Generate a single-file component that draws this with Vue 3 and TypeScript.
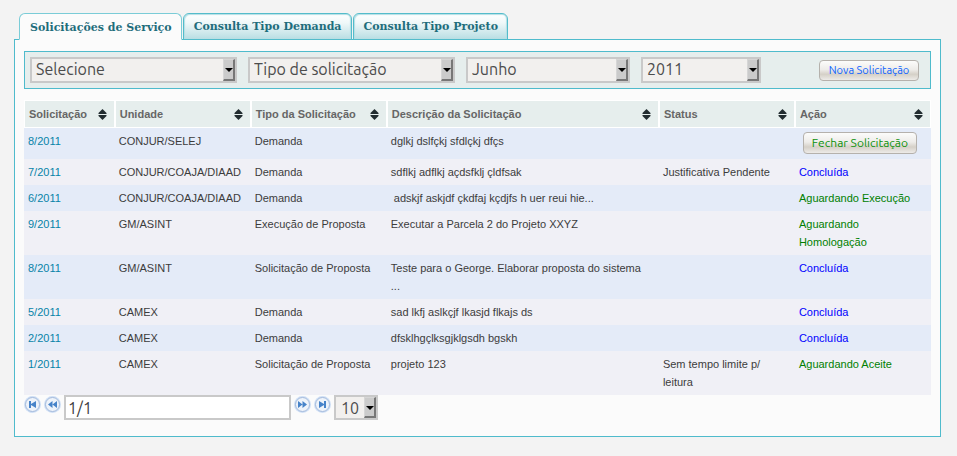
<script setup lang="ts">
import { ref } from 'vue'

interface Row {
  id: string
  unit: string
  type: string
  description: string
  status: string
  action: string
  kind: 'button' | 'done' | 'waiting'
}

const tabs = ['Solicitações de Serviço', 'Consulta Tipo Demanda', 'Consulta Tipo Projeto']
const activeTab = ref(0)

const filters = [
  { id: 'unidade', label: 'Unidade', size: 'large', options: ['Selecione'] },
  { id: 'tipo', label: 'Tipo', size: 'large', options: ['Tipo de solicitação'] },
  { id: 'mes', label: 'Mês', size: 'medium', options: ['Junho'] },
  { id: 'ano', label: 'Ano', size: 'small', options: ['2011'] },
]

const columns = [
  { title: 'Solicitação', cls: 'narrow' },
  { title: 'Unidade', cls: 'regular' },
  { title: 'Tipo da Solicitação', cls: 'regular' },
  { title: 'Descrição da Solicitação', cls: 'wide' },
  { title: 'Status', cls: 'regular' },
  { title: 'Ação', cls: 'regular' },
]

const rows: Row[] = [
  { id: '8/2011', unit: 'CONJUR/SELEJ', type: 'Demanda', description: 'dglkj dslfçkj sfdlçkj dfçs', status: '', action: 'Fechar Solicitação', kind: 'button' },
  { id: '7/2011', unit: 'CONJUR/COAJA/DIAAD', type: 'Demanda', description: 'sdflkj adflkj açdsfklj çldfsak', status: 'Justificativa Pendente', action: 'Concluída', kind: 'done' },
  { id: '6/2011', unit: 'CONJUR/COAJA/DIAAD', type: 'Demanda', description: '\u00a0adskjf askjdf çkdfaj kçdjfs h uer reui hie...', status: '', action: 'Aguardando Execução', kind: 'waiting' },
  { id: '9/2011', unit: 'GM/ASINT', type: 'Execução de Proposta', description: 'Executar a Parcela 2 do Projeto XXYZ', status: '', action: 'Aguardando Homologação', kind: 'waiting' },
  { id: '8/2011', unit: 'GM/ASINT', type: 'Solicitação de Proposta', description: 'Teste para o George. Elaborar proposta do sistema\n...', status: '', action: 'Concluída', kind: 'done' },
  { id: '5/2011', unit: 'CAMEX', type: 'Demanda', description: 'sad lkfj aslkçjf lkasjd flkajs ds', status: '', action: 'Concluída', kind: 'done' },
  { id: '2/2011', unit: 'CAMEX', type: 'Demanda', description: 'dfsklhgçlksgjklgsdh bgskh', status: '', action: 'Concluída', kind: 'done' },
  { id: '1/2011', unit: 'CAMEX', type: 'Solicitação de Proposta', description: 'projeto 123', status: 'Sem tempo limite p/ leitura', action: 'Aguardando Aceite', kind: 'waiting' },
]

const page = ref('1/1')
const back = [
  { label: 'Primeira página', d: 'M5 5h2v3l5-3v7l-5-3v3H5z' },
  { label: 'Página anterior', d: 'M4 8.500 8.500 5v7zM8.500 8.500 13 5v7z' },
]
const forward = [
  { label: 'Próxima página', d: 'M13 8.500 8.500 5v7zM8.500 8.500 4 5v7z' },
  { label: 'Última página', d: 'M12 5h-2v3L5 5v7l5-3v3h2z' },
]
</script>

<template>
  <main class="page">
    <nav class="tabs" role="tablist">
      <button
        v-for="(tab, i) in tabs"
        :key="tab"
        type="button"
        role="tab"
        class="tab"
        :class="{ active: i === activeTab }"
        :aria-selected="i === activeTab"
        @click="activeTab = i"
      >{{ tab }}</button>
    </nav>

    <section class="panel">
      <form class="toolbar" @submit.prevent>
        <div v-for="f in filters" :key="f.id" class="picker" :class="f.size">
          <select :id="f.id" :aria-label="f.label">
            <option v-for="o in f.options" :key="o">{{ o }}</option>
          </select>
          <span class="arrow"></span>
        </div>
        <button type="button" class="soft create">Nova Solicitação</button>
      </form>

      <table class="grid">
        <thead>
          <tr>
            <th v-for="c in columns" :key="c.title" :class="c.cls" scope="col">
              <div class="head">
                <span>{{ c.title }}</span>
                <svg class="sort" width="9" height="11" viewBox="0 0 9 11" aria-hidden="true">
                  <path d="M4.500 0 8.500 4v1H.5V4zM4.500 11 8.500 7V6H.5v1z" fill="#222c30" />
                </svg>
              </div>
            </th>
          </tr>
        </thead>
        <tbody>
          <tr v-for="(r, i) in rows" :key="i">
            <td><a href="#" class="code">{{ r.id }}</a></td>
            <td>{{ r.unit }}</td>
            <td>{{ r.type }}</td>
            <td class="description">{{ r.description }}</td>
            <td>{{ r.status }}</td>
            <td :class="{ holder: r.kind === 'button' }">
              <button v-if="r.kind === 'button'" type="button" class="soft close">{{ r.action }}</button>
              <span v-else :class="r.kind">{{ r.action }}</span>
            </td>
          </tr>
        </tbody>
      </table>

      <div class="pager">
        <button v-for="b in back" :key="b.label" type="button" class="step" :aria-label="b.label">
          <svg width="17" height="17" viewBox="0 0 17 17" aria-hidden="true">
            <circle cx="8.500" cy="8.500" r="8.500" fill="#cfdff5" />
            <circle cx="8.500" cy="8.500" r="7" fill="#eef3fa" stroke="#a5bbdc" />
            <path :d="b.d" fill="#4783c9" />
          </svg>
        </button>
        <input v-model="page" class="current" type="text" aria-label="Página atual" />
        <button v-for="b in forward" :key="b.label" type="button" class="step" :aria-label="b.label">
          <svg width="17" height="17" viewBox="0 0 17 17" aria-hidden="true">
            <circle cx="8.500" cy="8.500" r="8.500" fill="#cfdff5" />
            <circle cx="8.500" cy="8.500" r="7" fill="#eef3fa" stroke="#a5bbdc" />
            <path :d="b.d" fill="#4783c9" />
          </svg>
        </button>
        <div class="picker mini">
          <select aria-label="Itens por página">
            <option>10</option>
            <option>20</option>
          </select>
          <span class="arrow"></span>
        </div>
      </div>
    </section>
  </main>
</template>

<style>
body {
  background: #f3f3f3;
}
</style>

<style scoped>
.page {
  padding: 13px 16px 16px 14px;
  font-family: 'Liberation Sans', Arial, sans-serif;
  font-size: 11px;
  line-height: 18px;
  color: #3c3c3c;
}

button,
select,
input {
  margin: 0;
  font-family: Ubuntu, 'Noto Sans', sans-serif;
}

.tabs {
  position: relative;
  display: flex;
  gap: 1px;
  padding-left: 5px;
  margin-bottom: -1px;
}

.tab {
  height: 27px;
  padding: 1px 9px 1px 10px;
  border: 1px solid #53bccb;
  border-radius: 6px 6px 0 0;
  background: linear-gradient(#fff, #f0f8f9 35%, #b9dee3);
  box-shadow: inset 1px 1px 1px #b4dfe5, inset -1px 0 1px #b4dfe5;
  color: #1f6d7c;
  font: bold 11px/22px 'DejaVu Serif', serif;
  white-space: nowrap;
}

.tab.active {
  padding-top: 2px;
  padding-bottom: 0;
  border-color: #7accd7;
  border-bottom-color: #fbfbfb;
  background: #fbfbfb;
  box-shadow: none;
}

.panel {
  padding: 11px 9px 16px;
  border: 1px solid #4fbbcc;
  background: #fbfbfb;
}

.toolbar {
  display: flex;
  align-items: center;
  gap: 11px;
  height: 38px;
  box-sizing: border-box;
  padding: 0 11px 0 5px;
  margin-bottom: 11px;
  border: 1px solid #4fbbcc;
  background: #e6eeed;
}

.picker {
  position: relative;
  display: flex;
}

.picker select {
  width: 100%;
  height: 26px;
  padding: 0 18px 2px 4px;
  border: 2px solid #c9c9c9;
  border-radius: 0;
  appearance: none;
  background: #f2f0ee;
  color: #4c4c4c;
  font-size: 16px;
  line-height: 20px;
}

.large {
  width: 207px;
}

.medium {
  width: 164px;
}

.small {
  width: 120px;
}

.mini {
  width: 44px;
}

.picker.mini select {
  height: 25px;
  padding: 0 14px 0 5px;
}

.arrow {
  position: absolute;
  top: 2px;
  right: 2px;
  bottom: 2px;
  width: 12px;
  box-sizing: border-box;
  border: 1px solid #d6d6d6;
  border-right: 2px solid #777;
  border-bottom: 2px solid #777;
  background: #cbcbcb;
  pointer-events: none;
}

.arrow::after {
  content: '';
  position: absolute;
  top: 8px;
  left: 1px;
  border: 4px solid transparent;
  border-top-color: #000;
  border-bottom-width: 0;
}

.soft {
  box-sizing: border-box;
  padding: 0;
  border: 1px solid #b5b1ac;
  border-radius: 4px;
  background: linear-gradient(#fcfcfb, #eeece9 45%, #d5d0c7 70%, #edebe8);
  font-size: 11px;
  line-height: 18px;
  white-space: nowrap;
}

.create {
  width: 100px;
  height: 21px;
  margin-left: auto;
  color: #0c63ff;
}

.close {
  display: block;
  width: 114px;
  height: 22px;
  margin-left: 4px;
  color: #0c910c;
  font-size: 12px;
}

.grid {
  width: 100%;
  table-layout: fixed;
  border-collapse: separate;
  border-spacing: 0;
}

.narrow {
  width: 10%;
}

.regular {
  width: 15%;
}

.wide {
  width: 30%;
}

th {
  box-sizing: border-box;
  height: 28px;
  padding: 0 7px 0 4px;
  border: 1px solid #fff;
  background: #e6eeed;
  color: #666;
  text-align: left;
}

.head {
  display: flex;
  align-items: center;
  justify-content: space-between;
  white-space: nowrap;
}

.sort {
  flex: none;
}

td {
  padding: 4px;
  vertical-align: top;
}

.description {
  white-space: pre-line;
}

tbody tr:nth-child(odd) {
  background: #e4ebf8;
}

tbody tr:nth-child(even) {
  background: #f0f0f6;
}

td.holder {
  padding-bottom: 5px;
}

.code {
  color: #0783a8;
  text-decoration: none;
}

.done {
  color: #00f;
}

.waiting {
  color: #008000;
}

.pager {
  display: flex;
  align-items: flex-start;
  gap: 3px;
}

.step {
  display: flex;
  padding: 1px 0 0;
  border: 0;
  background: none;
}

.current {
  width: 227px;
  height: 25px;
  box-sizing: border-box;
  padding: 0 2px;
  border: 2px solid #c9c9c9;
  background: #fff;
  color: #3c3c3c;
  font-size: 16px;
}
</style>
